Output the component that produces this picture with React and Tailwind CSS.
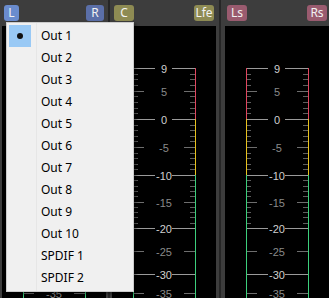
import React from 'react';

const points = [
  [9, 42],
  [0, 93],
  [-10, 149],
  [-20, 202],
  [-30, 248],
  [-35, 267],
  [-40, 286],
];

function dbToY(db) {
  for (let i = 0; i < points.length - 1; i++) {
    const [d0, y0] = points[i];
    const [d1, y1] = points[i + 1];
    if (db <= d0 && db >= d1) {
      return y0 + ((d0 - db) / (d0 - d1)) * (y1 - y0);
    }
  }
  return 290;
}

const majors = [9, 0, -10, -20, -30];
const mediums = [5, -5, -15, -25, -35];

function Scale() {
  const L = 21;
  const R = 83;
  const minors = [];
  for (let d = 9; d >= -20; d--) {
    if (!majors.includes(d) && !mediums.includes(d)) minors.push(d);
  }
  return (
    <svg width="104" height="272" className="block">
      {minors.map((d) => {
        const y = Math.round(dbToY(d)) + 0.5;
        return (
          <g key={d} stroke="#5e5e5e">
            <line x1={L} x2={L + 5} y1={y} y2={y} />
            <line x1={R - 5} x2={R} y1={y} y2={y} />
          </g>
        );
      })}
      {mediums.map((d) => {
        const y = Math.round(dbToY(d)) + 0.5;
        return (
          <g key={d}>
            <line x1={L} x2={L + 11} y1={y} y2={y} stroke="#6e6e6e" />
            <line x1={R - 11} x2={R} y1={y} y2={y} stroke="#6e6e6e" />
            <text x="52" y={y + 4} textAnchor="middle" fontSize="11" fill="#8a8a8a" fontFamily="Liberation Sans, Arial, sans-serif">
              {d}
            </text>
          </g>
        );
      })}
      {majors.map((d) => {
        const y = Math.round(dbToY(d)) + 0.5;
        return (
          <g key={d}>
            <line x1={L} x2={43} y1={y} y2={y} stroke="#9a9a9a" />
            <line x1={60} x2={R} y1={y} y2={y} stroke="#9a9a9a" />
            <text x="52" y={y + 4} textAnchor="middle" fontSize="11" fill="#cfcfcf" fontFamily="Liberation Sans, Arial, sans-serif">
              {d}
            </text>
          </g>
        );
      })}
      {[L + 0.5, R + 0.5].map((x) => (
        <g key={x}>
          <line x1={x} x2={x} y1={42} y2={93} stroke="#e0465f" />
          <line x1={x} x2={x} y1={93} y2={149} stroke="#e8c21e" />
          <line x1={x} x2={x} y1={149} y2={272} stroke="#3ccf7c" />
        </g>
      ))}
    </svg>
  );
}

function Badge({ label, color, w }) {
  return (
    <div
      className={`h-[16px] ${w} ${color} rounded-[3px] flex items-center justify-center text-[12px] leading-none text-[#f2f2f2]`}
      style={{ fontFamily: '"Noto Sans", sans-serif' }}
    >
      {label}
    </div>
  );
}

function Column({ left, right, color, leftColor, lw, rw, className }) {
  return (
    <div className={`flex flex-col w-[104px] ${className}`}>
      <div className="h-[26px] flex justify-between items-start pt-[5px] px-[2px]">
        <Badge label={left} color={leftColor || color} w={lw || 'w-[20px]'} />
        <Badge label={right} color={color} w={rw || 'w-[20px]'} />
      </div>
      <div className="flex-1 bg-black overflow-hidden">
        <Scale />
      </div>
    </div>
  );
}

const items = ['Out 1', 'Out 2', 'Out 3', 'Out 4', 'Out 5', 'Out 6', 'Out 7', 'Out 8', 'Out 9', 'Out 10', 'SPDIF 1', 'SPDIF 2'];

function Menu() {
  return (
    <div
      className="absolute left-[6px] top-[22px] w-[128px] bg-[#f0f0f0] border border-[#cccccc] py-[2px] shadow-[2px_2px_3px_rgba(0,0,0,0.45)]"
      style={{ fontFamily: '"Noto Sans", sans-serif' }}
    >
      <div className="absolute left-[29px] top-0 bottom-0 w-px bg-[#e6e6e6]" />
      {items.map((it, i) => (
        <div key={it} className="relative h-[22px] flex items-center text-[12px] text-black">
          <div className="w-[34px] h-[22px] flex items-center pl-[2px]">
            {i === 0 && (
              <div className="w-[22px] h-[22px] bg-[#99c9f5] flex items-center justify-center">
                <div className="w-[6px] h-[6px] rounded-full bg-[#111]" />
              </div>
            )}
          </div>
          <span>{it}</span>
        </div>
      ))}
    </div>
  );
}

export default function App() {
  return (
    <div className="relative w-[329px] h-[298px] bg-[#3d3d3d] flex overflow-hidden">
      <div className="w-[2px]" />
      <Column left="L" right="R" color="bg-[#5b6fa8]" leftColor="bg-[#6a8cce]" lw="w-[15px]" rw="w-[18px]" />
      <div className="w-[2px]" />
      <div className="w-[2px] bg-[#262626]" />
      <div className="w-[2px]" />
      <Column left="C" right="Lfe" color="bg-[#8e8b53]" />
      <div className="w-[3px]" />
      <div className="w-[2px] bg-[#262626]" />
      <div className="w-[4px]" />
      <Column left="Ls" right="Rs" color="bg-[#9a5b6f]" />
      <Menu />
    </div>
  );
}
